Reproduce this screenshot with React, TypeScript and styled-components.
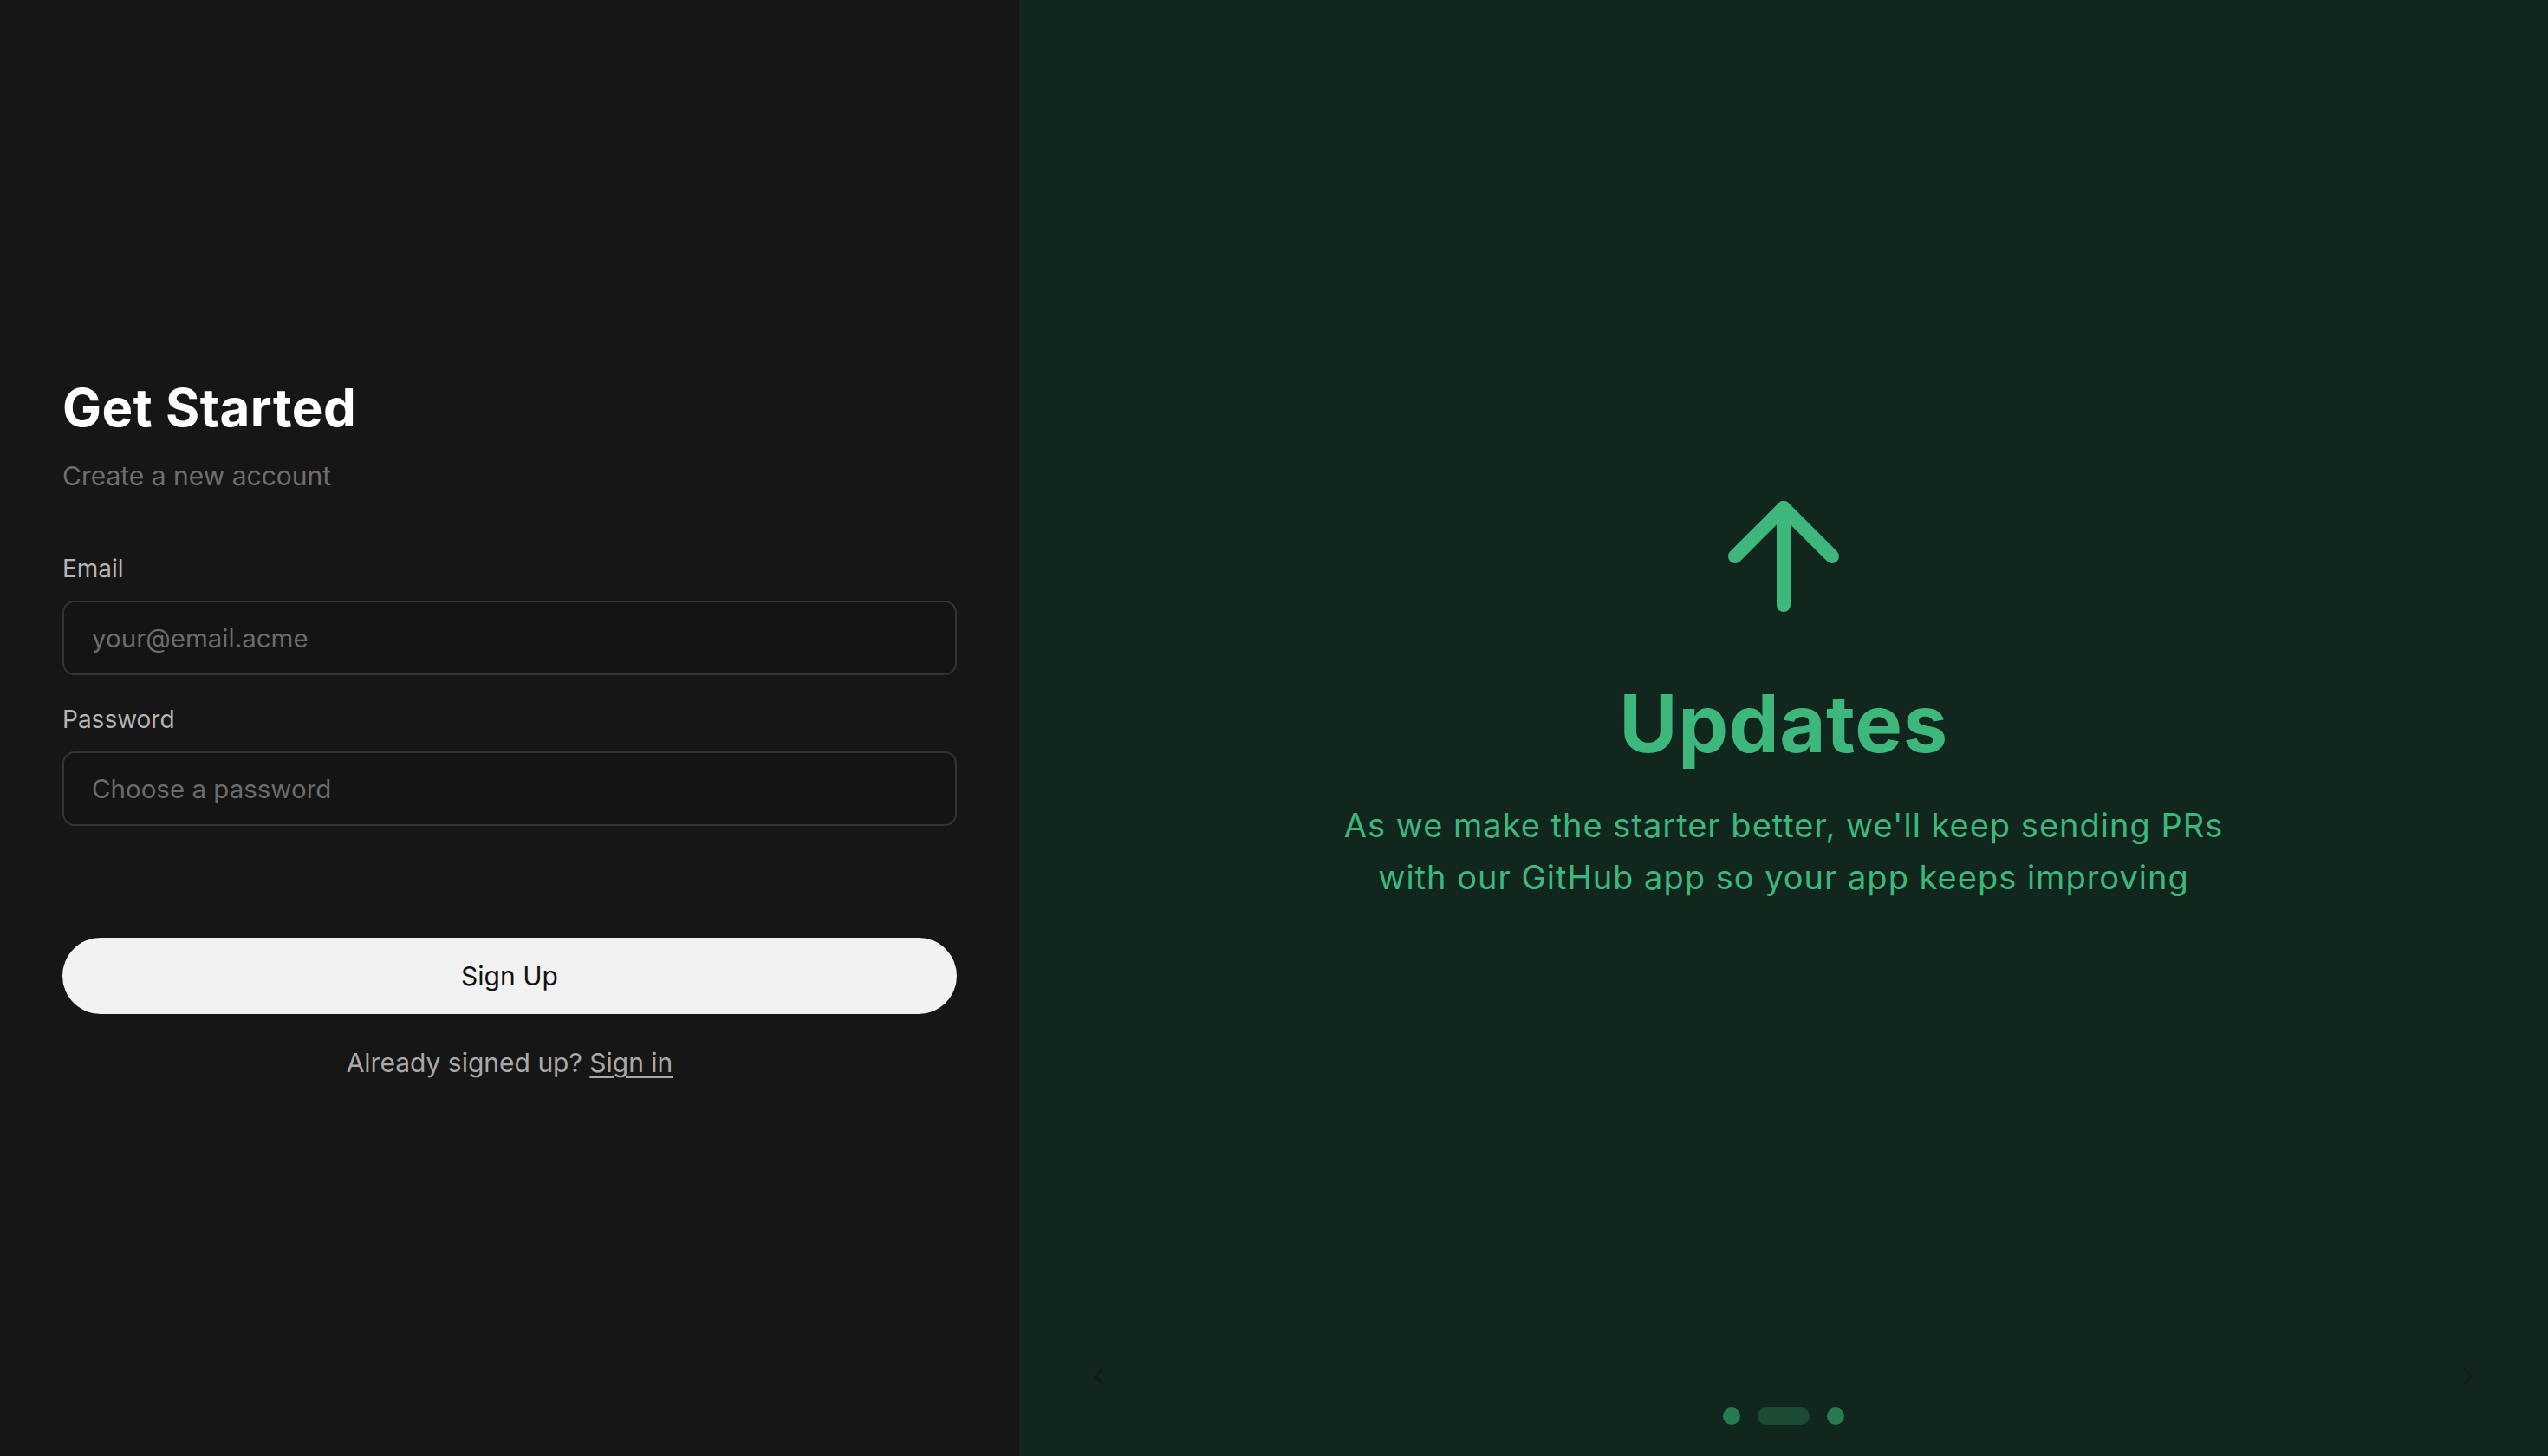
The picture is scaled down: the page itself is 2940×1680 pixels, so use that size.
import React from "react";
import styled, { createGlobalStyle } from "styled-components";
import { ArrowUp, ChevronLeft, ChevronRight } from "lucide-react";

const Global = createGlobalStyle`
  html, body { margin: 0; padding: 0; background: #161616; }
  body { font-family: Inter, "Noto Sans", sans-serif; }
  * { box-sizing: border-box; }
`;

const Page = styled.div`
  display: grid;
  grid-template-columns: 1176px 1fr;
  width: 2940px;
  height: 1680px;
  overflow: hidden;
`;

const FormPanel = styled.section`
  background: #161616;
  display: flex;
  flex-direction: column;
  justify-content: center;
  padding: 0 72px;
`;

const Title = styled.h1`
  margin: 0;
  font-size: 60px;
  line-height: 72px;
  font-weight: 700;
  color: #ffffff;
  letter-spacing: 0.5px;
`;

const Subtitle = styled.p`
  margin: 23px 0 0;
  font-size: 30px;
  line-height: 40px;
  color: #6e6e6e;
`;

const Form = styled.form`
  display: flex;
  flex-direction: column;
  margin-top: 67px;
`;

const Label = styled.label<{ $first?: boolean }>`
  display: block;
  font-size: 28px;
  line-height: 40px;
  color: #b4b4b4;
  margin-top: ${(p) => (p.$first ? "0" : "31px")};
  margin-bottom: 17px;
`;

const Input = styled.input`
  width: 100%;
  height: 86px;
  border: 2px solid #333333;
  border-radius: 14px;
  background: #141414;
  padding: 0 32px;
  font-family: Inter, "Noto Sans", sans-serif;
  font-size: 29.5px;
  color: #e5e5e5;
  outline: none;
  &::placeholder { color: #6b6b6b; }
`;

const SubmitButton = styled.button`
  margin-top: 129px;
  height: 88px;
  width: 100%;
  border: none;
  border-radius: 999px;
  background: #f3f2f2;
  color: #111111;
  font-family: Inter, "Noto Sans", sans-serif;
  font-size: 30px;
  cursor: pointer;
`;

const Footnote = styled.p`
  margin: 36px 0 0;
  text-align: center;
  font-size: 30px;
  line-height: 40px;
  color: #a9a9a9;
`;

const FootLink = styled.a`
  color: #a9a9a9;
  text-decoration: underline;
  text-underline-offset: 5px;
  text-decoration-thickness: 2px;
`;

const ShowcasePanel = styled.section`
  position: relative;
  background: #11271e;
  display: flex;
  flex-direction: column;
`;

const Slide = styled.div`
  flex: 1;
  display: flex;
  flex-direction: column;
  align-items: center;
  justify-content: center;
  color: #3db77b;
  text-align: center;
`;

const SlideTitle = styled.h2`
  margin: 52px 0 0;
  font-size: 92px;
  line-height: 90px;
  font-weight: 700;
  letter-spacing: 0.5px;
  color: #3db77b;
`;

const SlideText = styled.p`
  margin: 42px 0 0;
  max-width: 1060px;
  font-size: 38px;
  line-height: 60px;
  letter-spacing: 1px;
  color: #3db77b;
`;

const DotsBar = styled.div`
  height: 92px;
  display: flex;
  align-items: center;
  justify-content: center;
  gap: 20px;
`;

const Dot = styled.span<{ $active?: boolean }>`
  display: block;
  height: 20px;
  width: ${(p) => (p.$active ? "60px" : "20px")};
  border-radius: 10px;
  background: ${(p) => (p.$active ? "#1c4b34" : "#267b53")};
`;

const NavButton = styled.button<{ $side: "left" | "right" }>`
  position: absolute;
  bottom: 76px;
  ${(p) => (p.$side === "left" ? "left: 76px;" : "right: 76px;")}
  width: 32px;
  height: 32px;
  padding: 0;
  border: none;
  background: transparent;
  color: #151816;
  display: flex;
  align-items: center;
  justify-content: center;
`;

export default function App() {
  return (
    <>
      <Global />
      <Page>
        <FormPanel>
          <Title>Get Started</Title>
          <Subtitle>Create a new account</Subtitle>
          <Form onSubmit={(e) => e.preventDefault()}>
            <Label $first htmlFor="email">Email</Label>
            <Input id="email" type="email" placeholder="your@email.acme" />
            <Label htmlFor="password">Password</Label>
            <Input id="password" type="password" placeholder="Choose a password" />
            <SubmitButton type="submit">Sign Up</SubmitButton>
          </Form>
          <Footnote>
            Already signed up? <FootLink href="#">Sign in</FootLink>
          </Footnote>
        </FormPanel>
        <ShowcasePanel>
          <Slide>
            <ArrowUp size={192} strokeWidth={2} color="#3db77b" />
            <SlideTitle>Updates</SlideTitle>
            <SlideText>
              As we make the starter better, we'll keep sending PRs with our GitHub app so your app keeps improving
            </SlideText>
          </Slide>
          <DotsBar>
            <Dot />
            <Dot $active />
            <Dot />
          </DotsBar>
          <NavButton $side="left" aria-label="Previous">
            <ChevronLeft size={32} strokeWidth={2} />
          </NavButton>
          <NavButton $side="right" aria-label="Next">
            <ChevronRight size={32} strokeWidth={2} />
          </NavButton>
        </ShowcasePanel>
      </Page>
    </>
  );
}
